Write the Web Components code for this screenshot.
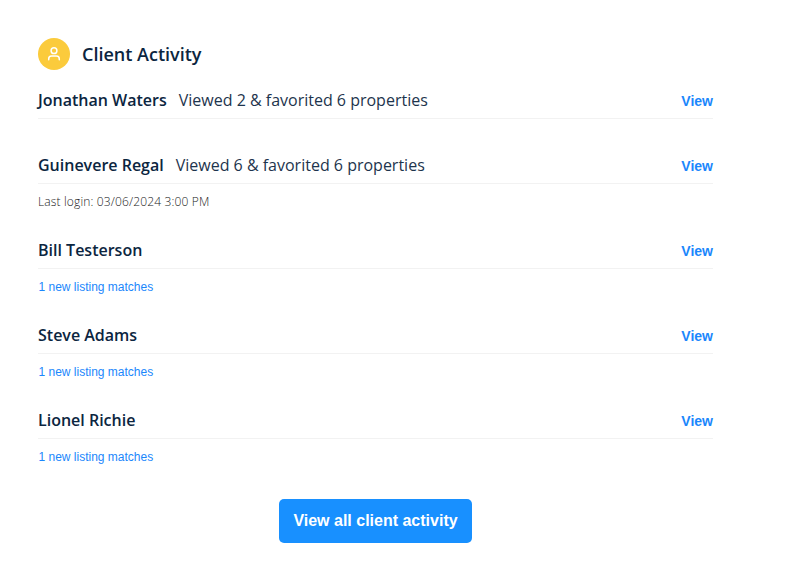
<!DOCTYPE html>
<html lang="en">
<head>
  <meta charset="utf-8">
  <title>Client Activity</title>
  <style>
    body {
      margin: 0;
      background: #fff;
      color: #0b2540;
      font-family: "Open Sans", sans-serif;
    }
  </style>
</head>
<body>
  <client-activity heading="Client Activity">
    <activity-row name="Jonathan Waters" summary="Viewed 2 &amp; favorited 6 properties"></activity-row>
    <activity-row name="Guinevere Regal" summary="Viewed 6 &amp; favorited 6 properties">
      <activity-note>Last login: 03/06/2024 3:00 PM</activity-note>
    </activity-row>
    <activity-row name="Bill Testerson">
      <activity-note link>1 new listing matches</activity-note>
    </activity-row>
    <activity-row name="Steve Adams">
      <activity-note link>1 new listing matches</activity-note>
    </activity-row>
    <activity-row name="Lionel Richie">
      <activity-note link>1 new listing matches</activity-note>
    </activity-row>
    <primary-button slot="footer">View all client activity</primary-button>
  </client-activity>

  <script>
    class ClientActivity extends HTMLElement {
      constructor() {
        super();
        this.shadowDOM = this.attachShadow({mode: 'open'});
      }

      connectedCallback() {
        this.render();
      }

      render() {
        this.shadowDOM.innerHTML = `
          <style>
            :host {
              display: block;
              width: 675px;
              padding: 38px 0 0 38px;
            }

            header {
              display: flex;
              align-items: center;
              gap: 12px;
              height: 32px;
              margin-bottom: 12px;
            }

            .icon {
              width: 32px;
              height: 32px;
              flex: none;
            }

            h2 {
              margin: 0;
              font-size: 18px;
              font-weight: 600;
              line-height: 32px;
            }

            footer {
              display: flex;
              justify-content: center;
            }
          </style>

          <header>
            <svg class="icon" viewBox="0 0 32 32" fill="none" stroke="#fff" stroke-width="1.5" stroke-linecap="round">
              <circle cx="16" cy="16" r="16" fill="#fbcb3c" stroke="none"/>
              <circle cx="16" cy="12.7" r="2.9"/>
              <path d="M10.7 21.8v-.9a2.8 2.8 0 0 1 2.8-2.8h5a2.8 2.8 0 0 1 2.8 2.8v.9"/>
            </svg>
            <h2>${this.getAttribute('heading')}</h2>
          </header>
          <slot></slot>
          <footer><slot name="footer"></slot></footer>
        `;
      }
    }

    class ActivityRow extends HTMLElement {
      constructor() {
        super();
        this.shadowDOM = this.attachShadow({mode: 'open'});
      }

      connectedCallback() {
        this.render();
      }

      render() {
        this.shadowDOM.innerHTML = `
          <style>
            :host {
              display: block;
              padding-bottom: 28px;
            }

            .line {
              display: flex;
              align-items: center;
              height: 36px;
              border-bottom: 1px solid #f2f2f2;
              font-size: 16px;
              line-height: 36px;
              white-space: nowrap;
            }

            .name {
              font-weight: 600;
              margin-right: 12px;
            }

            .summary {
              color: #1d344d;
              font-weight: 400;
            }

            a {
              margin: 2px 0 0 auto;
              color: #1b87fc;
              font-family: "Liberation Sans", Arial, sans-serif;
              font-size: 14px;
              font-weight: bold;
              text-decoration: none;
            }
          </style>

          <div class="line">
            <span class="name"></span>
            <span class="summary"></span>
            <a href="#">View</a>
          </div>
          <slot></slot>
        `;

        this.shadowDOM.querySelector('.name').textContent = this.getAttribute('name');
        this.shadowDOM.querySelector('.summary').textContent = this.getAttribute('summary') || '';
      }
    }

    class ActivityNote extends HTMLElement {
      constructor() {
        super();
        this.shadowDOM = this.attachShadow({mode: 'open'});
      }

      connectedCallback() {
        this.render();
      }

      render() {
        this.shadowDOM.innerHTML = `
          <style>
            :host {
              display: block;
              height: 20px;
              padding-top: 8px;
              margin-bottom: -8px;
              color: #222;
              font-size: 12px;
              font-weight: 300;
              line-height: 20px;
              letter-spacing: 0.15px;
            }

            :host([link]) {
              padding-left: 0.5px;
              color: #1b87fc;
              font-family: "Liberation Sans", Arial, sans-serif;
              font-weight: normal;
              letter-spacing: normal;
            }
          </style>
          <slot></slot>
        `;
      }
    }

    class PrimaryButton extends HTMLElement {
      constructor() {
        super();
        this.shadowDOM = this.attachShadow({mode: 'open'});
      }

      connectedCallback() {
        this.render();
      }

      render() {
        this.shadowDOM.innerHTML = `
          <style>
            :host {
              display: block;
              margin-top: 12px;
            }

            button {
              width: 193px;
              height: 44px;
              padding: 0;
              border: 0;
              border-radius: 5px;
              background-color: #1890ff;
              color: white;
              cursor: pointer;
              font: bold 16px "Liberation Sans", Arial, sans-serif;
            }
          </style>
          <button type="button"><slot></slot></button>
        `;
      }
    }

    customElements.define('client-activity', ClientActivity);
    customElements.define('activity-row', ActivityRow);
    customElements.define('activity-note', ActivityNote);
    customElements.define('primary-button', PrimaryButton);
  </script>
</body>
</html>
